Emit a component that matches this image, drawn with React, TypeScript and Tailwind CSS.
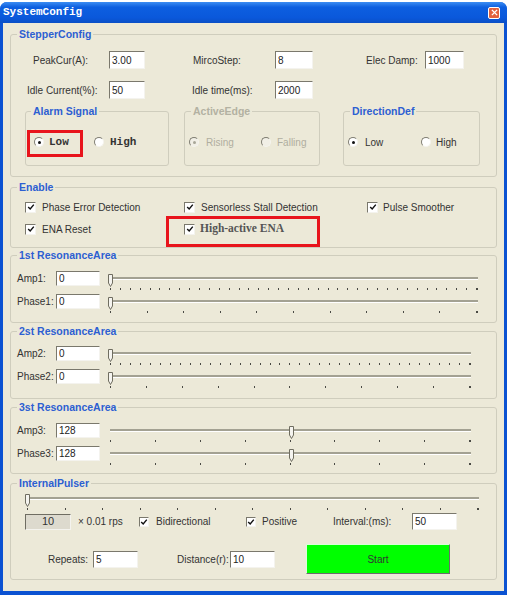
import type { ReactNode } from 'react'

// Classic XP dialog: stepper drive configuration

function Group({
  title,
  children,
  className = '',
  legendClass = 'ml-[6px]',
  disabled = false,
}: {
  title: string
  children: ReactNode
  className?: string
  legendClass?: string
  disabled?: boolean
}) {
  return (
    <fieldset className={`rounded-[3px] border border-[#cfcdbd] ${className}`}>
      <legend
        className={`${legendClass} px-[2px] text-[10.5px] font-bold leading-[14px] ${
          disabled ? 'text-[#b3b1a2]' : 'text-[#2d5fd2]'
        }`}
      >
        {title}
      </legend>
      {children}
    </fieldset>
  )
}

function Field({ value, className = '' }: { value: string; className?: string }) {
  return (
    <input
      readOnly
      value={value}
      className={`h-[18px] border border-[#f4f3ee] border-t-[#7a786c] border-l-[#7a786c] bg-white pl-[2px] text-[10px] text-[#222] outline-none ${className}`}
    />
  )
}

function Radio({ on = false, disabled = false }: { on?: boolean; disabled?: boolean }) {
  return (
    <span
      className={`flex h-[10px] w-[10px] shrink-0 items-center justify-center rounded-full border border-[#f4f3ee] border-t-[#7f7d72] border-l-[#7f7d72] ${
        disabled ? 'bg-[#f1efe6]' : 'bg-white'
      }`}
    >
      {on && (
        <span className={`h-[3px] w-[3px] rounded-full ${disabled ? 'bg-[#a8a698]' : 'bg-[#111]'}`} />
      )}
    </span>
  )
}

function Check({ small = false }: { small?: boolean }) {
  return (
    <span
      className={`flex shrink-0 items-center justify-center border border-[#f4f3ee] border-t-[#7a786c] border-l-[#7a786c] bg-white ${
        small ? 'h-[10px] w-[10px]' : 'h-[11px] w-[11px]'
      }`}
    >
      <svg viewBox="0 0 10 10" className="h-[8px] w-[8px]">
        <path d="M1.5 5 L4 7.5 L8.5 2" fill="none" stroke="#111" strokeWidth="1.8" />
      </svg>
    </span>
  )
}

function Slider({
  ticks,
  pos,
  className,
}: {
  ticks: number
  pos: number
  className: string
}) {
  return (
    <div className={`flex flex-col px-[3px] ${className}`}>
      <div className="relative h-[14px]">
        <div className="mt-[6px] h-[3px] border-b border-white bg-[#a3a192]" />
        <svg
          viewBox="0 0 5 13"
          className="absolute top-[3px] h-[13px] w-[5px]"
          style={{ left: `calc(${pos * 100}% - 2px)` }}
        >
          <path d="M0.5 0.5 H4.5 V9 L2.5 12.5 L0.5 9 Z" fill="#f5f4ef" stroke="#6f6d60" strokeWidth="1" />
        </svg>
      </div>
      <div className="mt-[3px] flex justify-between">
        {Array.from({ length: ticks }).map((_, i) => (
          <span
            key={i}
            className={`h-[2px] bg-[#4a4a44] ${i === ticks - 1 ? 'w-[2px]' : 'w-[1px]'}`}
          />
        ))}
      </div>
    </div>
  )
}

function SliderRow({
  label,
  value,
  ticks,
  pos,
  width,
}: {
  label: string
  value: string
  ticks: number
  pos: number
  width: string
}) {
  return (
    <div className="flex h-[23px] items-start pl-[6px]">
      <span className="flex h-[15px] w-[39px] items-center text-[10px] text-[#333]">{label}</span>
      <Field value={value} className="!h-[15px] w-[44px]" />
      <Slider ticks={ticks} pos={pos} className={`ml-[7px] ${width}`} />
    </div>
  )
}

export default function App() {
  return (
    <div className="h-[599px] w-[509px] bg-white pt-[2px] font-['Liberation_Sans',Arial,sans-serif]">
      <div className="flex h-[593px] w-[507px] flex-col rounded-t-[7px] bg-[#0b52d2]">
        {/* title bar */}
        <div className="flex h-[21px] items-center justify-between rounded-t-[7px] bg-[linear-gradient(180deg,#3c8df2_0%,#0d5fe0_25%,#0a58db_75%,#0a4fc6_100%)] pl-[3px] pr-[7px]">
          <span className="font-['Liberation_Mono',monospace] text-[11px] font-bold text-white">
            SystemConfig
          </span>
          <span className="flex h-[12px] w-[12px] items-center justify-center rounded-[2px] border border-white bg-[#e2613d]">
            <svg viewBox="0 0 8 8" className="h-[7px] w-[7px]">
              <path d="M1 1 L7 7 M7 1 L1 7" stroke="white" strokeWidth="1.6" />
            </svg>
          </span>
        </div>

        <div className="mx-[3px] mb-[4px] flex flex-1 flex-col bg-[#ece9d8] px-[7px] text-[10px] text-[#333]">
          {/* StepperConfig */}
          <Group title="StepperConfig" className="mt-[4px] pb-[10px]">
            <div className="mt-[10px] flex h-[18px] items-center pl-[22px]">
              <span className="w-[76px]">PeakCur(A):</span>
              <Field value="3.00" className="w-[36px]" />
              <span className="ml-[48px] w-[82px]">MircoStep:</span>
              <Field value="8" className="w-[38px]" />
              <span className="ml-[53px] w-[59px]">Elec Damp:</span>
              <Field value="1000" className="w-[39px]" />
            </div>
            <div className="mt-[12px] flex h-[18px] items-center pl-[16px]">
              <span className="w-[82px]">Idle Current(%):</span>
              <Field value="50" className="w-[36px]" />
              <span className="ml-[47px] w-[83px]">Idle time(ms):</span>
              <Field value="2000" className="w-[38px]" />
            </div>

            <div className="mt-[5px] flex pl-[14px]">
              <Group title="Alarm Signal" legendClass="ml-[5px]" className="h-[62px] w-[144px]">
                <div className="mt-[12px] flex items-start">
                  <div className="ml-[1px] flex h-[27px] w-[56px] items-center border-[3px] border-[#e8141c] pb-[3px] pl-[4px]">
                    <Radio on />
                    <span className="ml-[5px] font-['Liberation_Mono',monospace] text-[11px] font-bold text-[#333]">
                      Low
                    </span>
                  </div>
                  <div className="ml-[11px] mt-[3px] flex h-[18px] items-center">
                    <Radio />
                    <span className="ml-[6px] font-['Liberation_Mono',monospace] text-[11px] font-bold text-[#333]">
                      High
                    </span>
                  </div>
                </div>
              </Group>

              <Group title="ActiveEdge" disabled className="ml-[15px] h-[62px] w-[136px]">
                <div className="mt-[15px] flex h-[18px] items-center pl-[4px] text-[#b0ae9f]">
                  <div className="flex w-[72px] items-center gap-[7px]">
                    <Radio on disabled />
                    <span>Rising</span>
                  </div>
                  <div className="flex items-center gap-[6px]">
                    <Radio disabled />
                    <span>Falling</span>
                  </div>
                </div>
              </Group>

              <Group title="DirectionDef" className="ml-[23px] h-[62px] w-[137px]">
                <div className="mt-[15px] flex h-[18px] items-center pl-[4px]">
                  <div className="flex w-[73px] items-center gap-[7px]">
                    <Radio on />
                    <span>Low</span>
                  </div>
                  <div className="flex items-center gap-[5px]">
                    <Radio />
                    <span>High</span>
                  </div>
                </div>
              </Group>
            </div>
          </Group>

          {/* Enable */}
          <Group title="Enable" className="mt-[3px]">
            <div className="mt-[6px] flex h-[14px] items-center pl-[14px]">
              <div className="flex w-[159px] items-center gap-[6px]">
                <Check />
                <span>Phase Error Detection</span>
              </div>
              <div className="flex w-[183px] items-center gap-[6px]">
                <Check />
                <span>Sensorless Stall Detection</span>
              </div>
              <div className="flex items-center gap-[5px]">
                <Check />
                <span>Pulse Smoother</span>
              </div>
            </div>
            <div className="mt-[2px] flex items-start pl-[14px]">
              <div className="mt-[6px] flex h-[14px] w-[141px] items-center gap-[6px]">
                <Check />
                <span>ENA Reset</span>
              </div>
              <div className="flex h-[31px] w-[154px] items-start border-[3px] border-[#e8141c] pl-[15px] pt-[3px]">
                <div className="flex h-[14px] items-center gap-[5px]">
                  <Check />
                  <span className="font-['Liberation_Serif',serif] text-[11.5px] font-bold text-[#555]">
                    High-active ENA
                  </span>
                </div>
              </div>
            </div>
          </Group>

          {/* resonance suppression bands */}
          <Group title="1st ResonanceArea" className="pb-[5px]">
            <div className="mt-[9px]">
              <SliderRow label="Amp1:" value="0" ticks={38} pos={0} width="w-[374px]" />
              <SliderRow label="Phase1:" value="0" ticks={11} pos={0} width="w-[374px]" />
            </div>
          </Group>

          <Group title="2st ResonanceArea" className="mt-[1px] pb-[6px]">
            <div className="mt-[8px]">
              <SliderRow label="Amp2:" value="0" ticks={37} pos={0} width="w-[367px]" />
              <SliderRow label="Phase2:" value="0" ticks={11} pos={0} width="w-[367px]" />
            </div>
          </Group>

          <Group title="3st ResonanceArea" className="mt-[1px] pb-[4px]">
            <div className="mt-[9px]">
              <SliderRow label="Amp3:" value="128" ticks={9} pos={0.5} width="w-[367px]" />
              <SliderRow label="Phase3:" value="128" ticks={9} pos={0.5} width="w-[367px]" />
            </div>
          </Group>

          {/* InternalPulser */}
          <Group title="InternalPulser" className="mt-[2px] pb-[5px]">
            <Slider ticks={13} pos={0} className="ml-[13px] mt-[1px] w-[458px]" />
            <div className="mt-[3px] flex h-[17px] items-center pl-[14px]">
              <span className="flex h-[16px] w-[46px] items-center justify-center border border-[#f4f3ee] border-t-[#6f6d62] border-l-[#6f6d62] bg-[#dddace] text-[11px] text-[#333]">
                10
              </span>
              <span className="ml-[7px] w-[61px]">× 0.01 rps</span>
              <div className="flex w-[107px] items-center gap-[7px]">
                <Check small />
                <span>Bidirectional</span>
              </div>
              <div className="flex w-[87px] items-center gap-[6px]">
                <Check small />
                <span>Positive</span>
              </div>
              <span className="w-[79px]">Interval:(ms):</span>
              <Field value="50" className="!h-[17px] w-[45px]" />
            </div>
            <div className="mt-[14px] flex h-[30px] items-center pl-[37px]">
              <span className="w-[45px]">Repeats:</span>
              <Field value="5" className="!h-[17px] w-[45px]" />
              <span className="ml-[39px] w-[53px]">Distance(r):</span>
              <Field value="10" className="!h-[17px] w-[45px]" />
              <button className="ml-[31px] h-[30px] w-[144px] border border-[#d8ffd8] border-b-[#6b6b6b] border-r-[#6b6b6b] bg-[#00ff00] text-[10px] text-[#333]">
                Start
              </button>
            </div>
          </Group>
        </div>
      </div>
    </div>
  )
}
